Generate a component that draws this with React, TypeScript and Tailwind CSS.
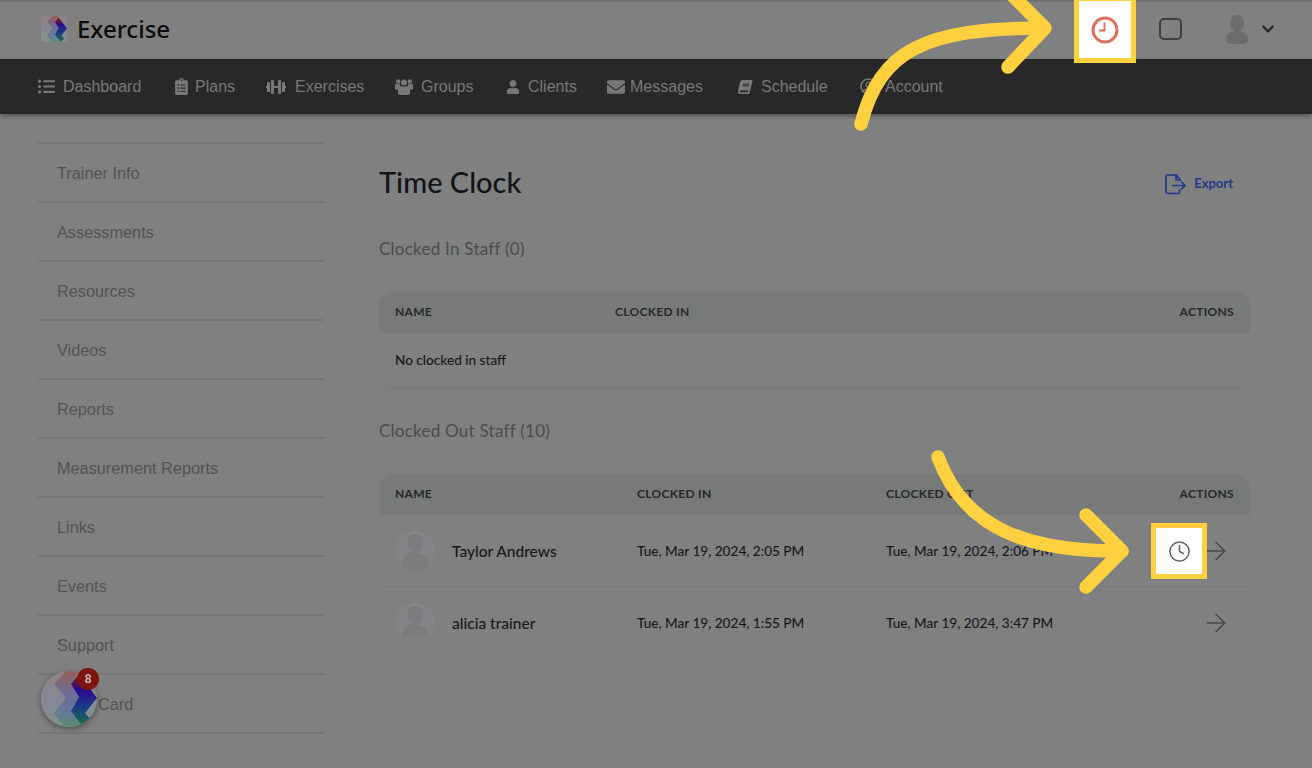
import { ArrowRight, Clock } from 'lucide-react'
import {
  FaBook,
  FaChevronDown,
  FaClipboardList,
  FaDumbbell,
  FaEnvelope,
  FaListUl,
  FaRegUserCircle,
  FaUser,
} from 'react-icons/fa'

function GroupIcon() {
  return (
    <svg width="18" height="17" viewBox="0 0 18 17" fill="currentColor">
      <circle cx="3.200" cy="3.500" r="2.200" />
      <circle cx="14.800" cy="3.500" r="2.200" />
      <circle cx="9" cy="4.500" r="3" />
      <path d="M0 7.500c0-1 1-1.500 2-1.500h2.500c.2 1.200.8 2 1.500 2.500-1.500.5-2.500 1.700-2.700 3.300H1c-.6 0-1-.4-1-1z" />
      <path d="M18 7.500c0-1-1-1.500-2-1.500h-2.500c-.2 1.200-.8 2-1.500 2.500 1.500.5 2.500 1.700 2.700 3.300H17c.6 0 1-.4 1-1z" />
      <path d="M5.500 8.500h7c1.500 0 2.500 1.500 2.500 3.500v3c0 1-1 2-2 2H5c-1 0-2-1-2-2v-3c0-2 1-3.500 2.500-3.500z" />
    </svg>
  )
}

const navItems = [
  { label: 'Dashboard', icon: <FaListUl size={17} />, w: 'w-[135px]', iw: 'w-[25px]' },
  { label: 'Plans', icon: <FaClipboardList size={17} />, w: 'w-[93px]', iw: 'w-[22px]' },
  { label: 'Exercises', icon: <FaDumbbell size={20} />, w: 'w-[129px]', iw: 'w-[29px]' },
  { label: 'Groups', icon: <GroupIcon />, w: 'w-[111px]', iw: 'w-[26px]' },
  { label: 'Clients', icon: <FaUser size={14} />, w: 'w-[101px]', iw: 'w-[22px]' },
  { label: 'Messages', icon: <FaEnvelope size={18} />, w: 'w-[131px]', iw: 'w-[23px]' },
  { label: 'Schedule', icon: <FaBook size={14} className="-skew-x-12" />, w: 'w-[122px]', iw: 'w-[23px]' },
  { label: 'Account', icon: <FaRegUserCircle size={17} />, w: 'w-[90px]', iw: 'w-[25px]' },
]

const sideItems = [
  'Trainer Info',
  'Assessments',
  'Resources',
  'Videos',
  'Reports',
  'Measurement Reports',
  'Links',
  'Events',
  'Support',
  'Card',
]

const staff = [
  { name: 'Taylor Andrews', inAt: 'Tue, Mar 19, 2024, 2:05 PM', outAt: 'Tue, Mar 19, 2024, 2:06 PM' },
  { name: 'alicia trainer', inAt: 'Tue, Mar 19, 2024, 1:55 PM', outAt: 'Tue, Mar 19, 2024, 3:47 PM' },
]

function Logo({ size, id, round }: { size: number; id: string; round?: boolean }) {
  return (
    <svg width={size} height={size} viewBox="0 0 56 56">
      <defs>
        <linearGradient id={`${id}-r`} x1="0" y1="0" x2="0" y2="1">
          <stop offset="0.05" stopColor="#8a1a14" />
          <stop offset="0.28" stopColor="#2a0a90" />
          <stop offset="0.62" stopColor="#1a3a88" />
          <stop offset="0.95" stopColor="#1a6a48" />
        </linearGradient>
        <linearGradient id={`${id}-m`} x1="0" y1="0" x2="0" y2="1">
          <stop offset="0.05" stopColor="#8d625c" />
          <stop offset="0.4" stopColor="#6e6c98" />
          <stop offset="0.7" stopColor="#66789a" />
          <stop offset="1" stopColor="#5f8a72" />
        </linearGradient>
        <linearGradient id={`${id}-l`} x1="0" y1="0" x2="0" y2="1">
          <stop offset="0" stopColor="#8f8484" />
          <stop offset="0.5" stopColor="#878896" />
          <stop offset="1" stopColor="#82928a" />
        </linearGradient>
        <clipPath id={`${id}-c`}>
          {round ? <circle cx="28" cy="28" r="28" /> : <rect x="0" y="0" width="56" height="56" rx="6" />}
        </clipPath>
      </defs>
      <g clipPath={`url(#${id}-c)`}>
        <rect width="56" height="56" fill={`url(#${id}-l)`} />
        <path d="M13 13L25 0H38L30 13L38 26L30 40L42 56H23L13 42L25 27Z" fill={`url(#${id}-m)`} />
        <path d="M30 13L38 3L56 27L44 42L50 49L42 56L30 40L38 26Z" fill={`url(#${id}-r)`} />
      </g>
    </svg>
  )
}

function Avatar() {
  return (
    <div className="relative w-[40px] h-[40px] rounded-full bg-[#828487] overflow-hidden shrink-0">
      <div className="absolute left-[13px] top-[3px] w-[15px] h-[18px] rounded-full bg-[#7c7c7d]" />
      <div className="absolute left-[6px] top-[21px] w-[28px] h-[20px] rounded-t-[14px] bg-[#7c7c7d]" />
    </div>
  )
}

function Th({ className, children }: { className?: string; children: React.ReactNode }) {
  return (
    <div className={`text-[12px] font-bold tracking-[0.3px] text-[#26282c] ${className ?? ''}`}>{children}</div>
  )
}

export default function App() {
  return (
    <div className="relative w-[1312px] h-[768px] overflow-hidden bg-[#808080] font-['Lato',sans-serif]">
      {/* header */}
      <div className="h-[59px] border-t-2 border-[#727272] flex items-center pl-[41px] pr-[37px] pb-[3px]">
        <Logo size={26} id="head" />
        <span className="ml-[10px] text-[24px] font-medium text-[#0b0b0b] font-['Noto_Sans',sans-serif]">
          Exercise
        </span>
        <div className="ml-auto flex items-center">
          <div className="w-[23px] h-[22px] rounded-[5px] border-2 border-[#3f3f3f]" />
          <div className="relative ml-[44px] w-[22px] h-[29px]">
            <div className="absolute left-[4px] top-0 w-[14px] h-[16px] rounded-full bg-[#6c6c6c]" />
            <div className="absolute left-0 top-[16px] w-[22px] h-[13px] rounded-t-[10px] rounded-b-[5px] bg-[#6c6c6c]" />
          </div>
          <FaChevronDown size={14} className="ml-[13px] text-[#272727]" />
        </div>
      </div>

      {/* nav */}
      <div className="h-[55px] bg-[#282828] shadow-[0_2px_4px_rgba(0,0,0,0.35)] flex items-center pl-[38px] font-['Liberation_Sans',sans-serif] text-[16px] text-[#787878]">
        {navItems.map((n) => (
          <div key={n.label} className={`flex items-center shrink-0 ${n.w}`}>
            <div className={`shrink-0 ${n.iw}`}>{n.icon}</div>
            <span>{n.label}</span>
          </div>
        ))}
      </div>

      <div className="flex h-[522px]">
        {/* sidebar */}
        <div className="ml-[38px] w-[286px] pt-[28px] shrink-0 font-['Liberation_Sans',sans-serif] text-[16.3px] text-[#535353]">
          <div className="border-t-2 border-[#767676]">
            {sideItems.map((s) => (
              <div
                key={s}
                className={`h-[59px] border-b-2 border-[#767676] pt-[2px] flex items-center ${s === 'Card' ? 'pl-[60px]' : 'pl-[19px]'}`}
              >
                {s}
              </div>
            ))}
          </div>
        </div>

        {/* main */}
        <div className="ml-[55px] w-[871px] overflow-hidden">
          <div className="pt-[48px] h-[100px] flex items-start justify-between">
            <h1 className="text-[29px] leading-[40px] font-medium text-[#111418]">Time Clock</h1>
            <div className="flex items-center gap-[8px] mr-[17px] mt-[11px] text-[#1f3a8a]">
              <svg width="22" height="22" viewBox="0 0 22 22" fill="none" stroke="#1f3a8a" strokeWidth="1.7" strokeLinecap="round" strokeLinejoin="round">
                <path d="M13 2H3.500A1.500 1.500 0 0 0 2 3.500V19a1.500 1.500 0 0 0 1.500 1.500h10.500a1.500 1.500 0 0 0 1.500-1.500v-2" />
                <path d="M12 2v5h4.500L12 2z" />
                <path d="M9 12.500h12M17.500 9l3.500 3.500-3.500 3.500" />
              </svg>
              <span className="text-[13px] font-bold">Export</span>
            </div>
          </div>

          <h2 className="mt-[24px] text-[17px] leading-[22px] text-[#4a4c50] tracking-[0.25px]">Clocked In Staff (0)</h2>

          <div className="mt-[32px] h-[95px] rounded-[14px] shadow-[0_1px_4px_rgba(0,0,0,0.06)] overflow-hidden">
            <div className="h-[41px] pb-[2px] bg-[#777a78] flex items-center pl-[16px] pr-[16px]">
              <Th className="w-[220px]">NAME</Th>
              <Th>CLOCKED IN</Th>
              <Th className="ml-auto">ACTIONS</Th>
            </div>
            <div className="h-[54px] flex items-center pl-[16px] text-[13.6px] font-medium text-[#16181c]">No clocked in staff</div>
          </div>

          <h2 className="mt-[33px] text-[17px] leading-[22px] text-[#4a4c50] tracking-[0.25px]">Clocked Out Staff (10)</h2>

          <div className="mt-[32px] rounded-t-[14px] overflow-hidden border-x border-[#7c7c7c]">
            <div className="h-[41px] pb-[2px] bg-[#777a78] flex items-center pl-[15px] pr-[15px]">
              <Th className="w-[242px]">NAME</Th>
              <Th className="w-[249px]">CLOCKED IN</Th>
              <Th>CLOCKED OUT</Th>
              <Th className="ml-auto">ACTIONS</Th>
            </div>
            {staff.map((p) => (
              <div key={p.name} className="h-[72px] flex items-center pl-[15px] pr-[18px] border-b border-[#7a7a7a]">
                <div className="w-[242px] flex items-center gap-[17px]">
                  <Avatar />
                  <span className="mt-[2px] text-[15.5px] font-medium text-[#16181c]">{p.name}</span>
                </div>
                <div className="mt-[2px] w-[249px] text-[13.6px] font-medium text-[#16181c]">{p.inAt}</div>
                <div className="mt-[2px] text-[13.6px] font-medium text-[#16181c]">{p.outAt}</div>
                <ArrowRight size={30} strokeWidth={1.3} className="ml-auto text-[#45474b]" />
              </div>
            ))}
          </div>
        </div>
      </div>

      {/* floating widget */}
      <div className="absolute left-[41px] top-[671px] w-[56px] h-[56px] rounded-full shadow-[0_2px_6px_rgba(0,0,0,0.4)]">
        <Logo size={56} id="widget" round />
        <div className="absolute left-[36px] top-[-3px] w-[22px] h-[22px] rounded-full bg-[#7c1410] text-[12px] font-bold text-[#c9b6b4] flex items-center justify-center font-['Liberation_Sans',sans-serif]">
          8
        </div>
      </div>

      {/* highlight cutouts */}
      <div className="absolute left-[1074px] top-[-4px] w-[62px] h-[67px] bg-white border-[5px] border-[#ffd040] flex items-center justify-center">
        <svg width="28" height="28" viewBox="0 0 28 28" fill="none" stroke="#e0705f" strokeLinecap="square">
          <circle cx="14" cy="14" r="12" strokeWidth="3" />
          <path d="M13.500 7.500v7H9" strokeWidth="2" />
        </svg>
      </div>
      <div className="absolute left-[1151px] top-[523px] w-[56px] h-[56px] bg-white border-[5px] border-[#ffd040] flex items-center justify-center">
        <Clock size={23} strokeWidth={1.6} className="text-[#5b6270]" />
      </div>

      {/* arrows */}
      <svg className="absolute inset-0 pointer-events-none" width="1312" height="768" fill="none" stroke="#ffd040" strokeWidth="13.500" strokeLinecap="round" strokeLinejoin="round">
        <path d="M861 124C880 50 925 28 1044 28" />
        <path d="M1007 -10L1045 28L1008 67" />
        <path d="M938 457C965 530 1030 552 1122 551" />
        <path d="M1086 515L1122 551L1086 587" />
      </svg>
    </div>
  )
}
